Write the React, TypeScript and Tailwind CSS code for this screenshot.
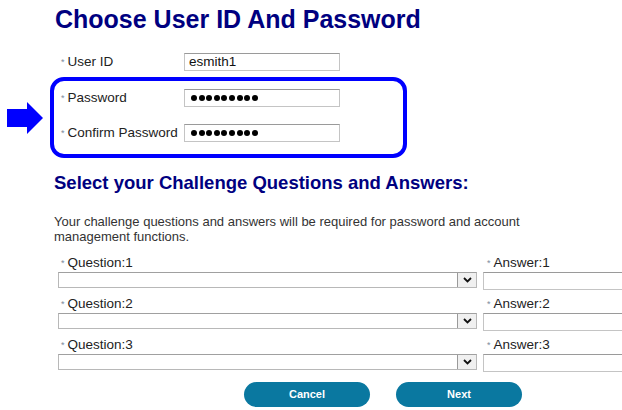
import React from "react";

const Star = () => (
  <span className="text-[9px] text-[#7a8c9c] mr-[3px] relative top-[-1px]">*</span>
);

const Dots = () => (
  <div className="flex items-center gap-[1.6px] pl-[6px]">
    {Array.from({ length: 9 }).map((_, i) => (
      <div key={i} className="w-[6px] h-[6px] rounded-full bg-black" />
    ))}
  </div>
);

const Field = ({ children }: { children?: React.ReactNode }) => (
  <div className="shrink-0 w-[156px] h-[18px] border border-[#c4c4c4] border-t-[#9a9a9a] bg-white flex items-center">
    {children}
  </div>
);

const QuestionRow = ({ n }: { n: number }) => (
  <div className="h-[41px] flex flex-col">
    <div className="flex h-[18px] items-center">
      <div className="shrink-0 w-[425px] pl-[3px] text-[13.5px] leading-[15px] text-[#222]">
        <Star />Question:{n}
      </div>
      <div className="shrink-0 pl-[4px] text-[13.5px] leading-[15px] text-[#222]">
        <Star />Answer:{n}
      </div>
    </div>
    <div className="flex items-start">
      <div className="shrink-0 w-[419px] h-[16px] border border-[#b8b8b8] border-t-[#a0a0a0] bg-white flex justify-end items-center">
        <div className="w-[19px] h-[14px] border-l border-[#9a9a9a] bg-[#f0f0f0] flex items-center justify-center">
          <svg width="9" height="6" viewBox="0 0 9 6">
            <path d="M1 1 L4.5 4.5 L8 1" stroke="#111" strokeWidth="1.8" fill="none" />
          </svg>
        </div>
      </div>
      <div className="shrink-0 ml-[6px] w-[160px] h-[18px] border border-[#c4c4c4] border-t-[#9a9a9a] bg-white" />
    </div>
  </div>
);

export default function App() {
  return (
    <div
      className="w-[622px] h-[410px] bg-white overflow-hidden"
      style={{ fontFamily: '"Liberation Sans", Arial, sans-serif' }}
    >
      <div className="pl-[55px] pt-[5px] text-[25px] leading-[29px] font-bold text-[#000080] whitespace-nowrap">
        Choose User ID And Password
      </div>

      <div className="mt-[19px] flex items-center h-[18px]">
        <div className="shrink-0 w-[184px] pl-[61px] text-[13.5px] text-[#222]">
          <Star />User ID
        </div>
        <Field>
          <span className="pl-[4px] text-[13.5px] text-[#111]">esmith1</span>
        </Field>
      </div>

      <div className="mt-[6px] flex items-center">
        <div className="shrink-0 w-[50px] pl-[7px] flex">
          <svg width="36" height="32" viewBox="0 0 36 32">
            <polygon points="0,7 20,7 20,0 36,16 20,32 20,25 0,25" fill="#0000ff" />
          </svg>
        </div>
        <div className="shrink-0 w-[357px] h-[81px] border-[4px] border-[#0000ff] rounded-[14px] pt-[8px] flex flex-col gap-[17px]">
          <div className="flex items-center h-[18px]">
            <div className="shrink-0 w-[130px] pl-[7px] text-[13.5px] text-[#222]">
              <Star />Password
            </div>
            <Field>
              <Dots />
            </Field>
          </div>
          <div className="flex items-center h-[18px]">
            <div className="shrink-0 w-[130px] pl-[7px] text-[13.5px] text-[#222] whitespace-nowrap">
              <Star />Confirm Password
            </div>
            <Field>
              <Dots />
            </Field>
          </div>
        </div>
      </div>

      <div className="mt-[14px] pl-[54px] text-[18.5px] leading-[22px] font-bold text-[#000080] whitespace-nowrap">
        Select your Challenge Questions and Answers:
      </div>

      <div className="mt-[20px] pl-[54px] w-[540px] text-[13px] leading-[15px] text-[#333]">
        Your challenge questions and answers will be required for password and account management functions.
      </div>

      <div className="mt-[10px] pl-[58px]">
        <QuestionRow n={1} />
        <QuestionRow n={2} />
        <QuestionRow n={3} />
      </div>

      <div className="mt-[5px] pl-[244px] flex gap-[26px]">
        <button className="w-[126px] h-[25px] rounded-full bg-[#0a78a0] text-white text-[11px] font-bold">
          Cancel
        </button>
        <button className="w-[126px] h-[25px] rounded-full bg-[#0a78a0] text-white text-[11px] font-bold">
          Next
        </button>
      </div>
    </div>
  );
}
